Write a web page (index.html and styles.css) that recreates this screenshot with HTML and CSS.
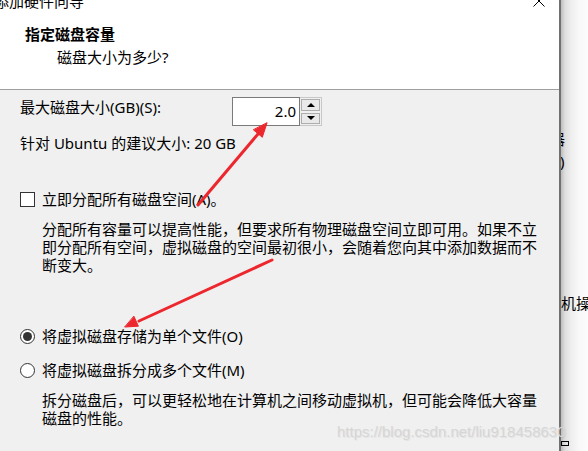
FILE: index.html
```html
<!DOCTYPE html>
<html lang="zh-CN">
<head>
    <meta charset="UTF-8">
    <title>添加硬件向导</title>
    <link rel="stylesheet" href="styles.css">
</head>
<body>
    <div class="screen">
        <div class="window">
            <div class="header">
                <div class="titlebar">
                    <span class="title">添加硬件向导</span>
                    <svg class="close" viewBox="0 0 12 12"><path d="M0.5 0.5L11.5 11.5M11.5 0.5L0.5 11.5" stroke="#000" stroke-width="1" fill="none"/></svg>
                </div>
                <h1>指定磁盘容量</h1>
                <p class="subtitle">磁盘大小为多少?</p>
            </div>

            <div class="content">
                <div class="size-row">
                    <label class="size-label">最大磁盘大小(GB)(S):</label>
                    <div class="spin">
                        <div class="spin-input">2.0</div>
                        <div class="spin-btns">
                            <span class="spin-btn"><i class="tri-up"></i></span>
                            <span class="spin-btn"><i class="tri-down"></i></span>
                        </div>
                    </div>
                </div>
                <p class="hint">针对 Ubuntu 的建议大小: 20 GB</p>

                <div class="option check-option">
                    <span class="checkbox"></span>
                    <span>立即分配所有磁盘空间(A)。</span>
                </div>
                <p class="desc">分配所有容量可以提高性能，但要求所有物理磁盘空间立即可用。如果不立<br>即分配所有空间，虚拟磁盘的空间最初很小，会随着您向其中添加数据而不<br>断变大。</p>

                <div class="option radio-first">
                    <span class="radio checked"></span>
                    <span>将虚拟磁盘存储为单个文件(O)</span>
                </div>
                <div class="option radio-second">
                    <span class="radio"></span>
                    <span>将虚拟磁盘拆分成多个文件(M)</span>
                </div>
                <p class="desc desc-split">拆分磁盘后，可以更轻松地在计算机之间移动虚拟机，但可能会降低大容量<br>磁盘的性能。</p>
            </div>
        </div>

        <!-- the window behind the dialog -->
        <div class="behind">
            <span class="behind-a">器</span>
            <span class="behind-b">)</span>
            <span class="behind-c">机操</span>
            <span class="behind-icon"></span>
        </div>
    </div>

    <svg class="arrows" width="588" height="451" viewBox="0 0 588 451">
        <g stroke="#ec272d" stroke-width="3" stroke-linecap="round" fill="#ec272d">
            <line x1="198" y1="205" x2="258" y2="134"/>
            <polygon points="267,123 262.3,137.3 253.6,130" stroke-width="1"/>
            <line x1="272" y1="260" x2="139" y2="321"/>
            <polygon points="125,327 138.4,326.2 134.0,316.5" stroke-width="1"/>
        </g>
    </svg>

    <div class="watermark">https://blog.csdn.net/liu918458630</div>
</body>
</html>
```

FILE: styles.css
```css
body {
    margin: 0;
    font-family: "Noto Sans", "Noto Sans CJK SC", sans-serif;
    font-size: 15px;
    color: #000;
    background: #fff;
}
.screen {
    display: flex;
    height: 451px;
    overflow: hidden;
}
.window {
    width: 559px;
    flex: none;
    display: flex;
    flex-direction: column;
    background: #f0f0f0;
    border-right: 2px solid #707070;
}
.header {
    height: 89px;
    background: #fff;
    border-bottom: 1px solid #a0a0a0;
}
.titlebar {
    height: 9px;
    overflow: hidden;
    display: flex;
    justify-content: space-between;
    align-items: flex-end;
}
.title {
    line-height: 15px;
    margin-left: -6px;
}
.close {
    width: 12px;
    height: 12px;
    margin: 0 14px 2px 0;
}
h1 {
    margin: 15px 0 0 25px;
    font-size: 15px;
    font-weight: 700;
    line-height: 20px;
}
.subtitle {
    margin: 3px 0 0 57px;
    line-height: 20px;
}
.content {
    flex: 1;
    padding: 7px 0 0 20px;
    line-height: 18px;
}
.content p {
    margin: 0;
}
.size-row {
    display: flex;
    align-items: flex-start;
}
.size-label {
    width: 212px;
    margin-top: 1px;
}
.spin {
    display: flex;
    height: 29px;
}
.spin-input {
    width: 68px;
    box-sizing: border-box;
    border: 1px solid #7a7a7a;
    background: #fff;
    text-align: right;
    padding-right: 3px;
    line-height: 27px;
}
.spin-btns {
    width: 22px;
    box-sizing: border-box;
    border: 1px solid #c8c8c8;
    border-left: none;
    padding: 1px 1px 1px 1px;
    display: flex;
    flex-direction: column;
    gap: 2px;
}
.spin-btn {
    flex: 1;
    border: 1px solid #adadad;
    background: #e9e9e9;
    display: flex;
    align-items: center;
    justify-content: center;
}
.tri-up {
    border-left: 4px solid transparent;
    border-right: 4px solid transparent;
    border-bottom: 4px solid #000;
}
.tri-down {
    border-left: 4px solid transparent;
    border-right: 4px solid transparent;
    border-top: 4px solid #000;
}
.hint {
    margin-top: 8px !important;
}
.option {
    display: flex;
    align-items: center;
    gap: 7px;
}
.check-option {
    margin-top: 38px;
}
.checkbox {
    width: 15px;
    height: 15px;
    box-sizing: border-box;
    border: 1px solid #333;
    background: #fff;
}
.desc {
    margin: 12px 0 0 22px !important;
    white-space: nowrap;
}
.radio-first {
    margin-top: 53px;
}
.radio-second {
    margin-top: 16px;
}
.radio {
    width: 15px;
    height: 15px;
    box-sizing: border-box;
    border: 1px solid #333;
    border-radius: 50%;
    background: #fff;
    display: flex;
    align-items: center;
    justify-content: center;
}
.radio.checked::after {
    content: "";
    width: 9px;
    height: 9px;
    border-radius: 50%;
    background: #333;
}
.behind {
    flex: 1;
    display: flex;
    flex-direction: column;
    overflow: hidden;
    line-height: 18px;
    background: linear-gradient(to right, #bdbdbd 0, #dedede 4px, #eeeeee 10px, #f8f8f8 18px, #fcfcfc 100%);
}
.behind-a {
    margin: 130px 0 0 -11px;
    white-space: nowrap;
}
.behind-b {
    margin: 4px 0 0 -1px;
}
.behind-c {
    margin: 124px 0 0 0;
    white-space: nowrap;
}
.behind-icon {
    width: 6px;
    height: 3px;
    border: 1px solid #000;
    margin: 129px 0 0 0;
}
.arrows {
    position: absolute;
    top: 0;
    left: 0;
    pointer-events: none;
}
.watermark {
    position: absolute;
    left: 337px;
    top: 424px;
    font-family: "Liberation Sans", sans-serif;
    font-size: 15px;
    line-height: 15px;
    color: #d6d6d6;
    text-shadow: 1px 1px 1px rgba(0, 0, 0, 0.06);
}
```
